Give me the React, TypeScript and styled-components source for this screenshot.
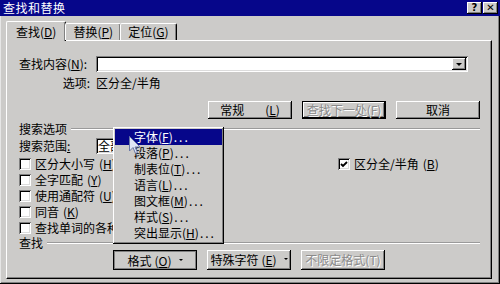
import React from 'react';
import styled, { createGlobalStyle } from 'styled-components';

const FACE = '#cccbc9';
const NAVY = '#06068a';

const GlobalStyle = createGlobalStyle`
  html, body { margin: 0; padding: 0; background: ${FACE}; }
  body {
    font-family: "Noto Sans CJK SC", "DejaVu Sans", sans-serif;
    font-size: 12px;
    color: #000;
  }
`;

const raised = `inset -1px -1px #000, inset 1px 1px #fff, inset -2px -2px #808080, inset 2px 2px ${FACE}`;
const sunken = `inset 1px 1px #808080, inset -1px -1px #fff, inset 2px 2px #000, inset -2px -2px #dcdcdc`;

const Window = styled.div`
  position: relative;
  width: 500px;
  height: 284px;
  box-sizing: border-box;
  background: ${FACE};
  box-shadow: inset -1px -1px #000, inset 1px 1px #e6e6e6, inset -2px -2px #808080;
  display: flex;
  flex-direction: column;
  overflow: hidden;
  line-height: 1;
`;

const TitleBar = styled.div`
  height: 16px;
  background: ${NAVY};
  color: #fff;
  display: flex;
  align-items: center;
  padding: 0 2px 0 3px;
  font-size: 12px;
`;

const TitleText = styled.span`
  flex: 1;
  letter-spacing: 0.5px;
`;

const CaptionButton = styled.div`
  width: 15px;
  height: 12px;
  margin-left: 1px;
  background: ${FACE};
  box-shadow: ${raised};
  color: #000;
  display: flex;
  align-items: center;
  justify-content: center;
  font-family: "DejaVu Sans", sans-serif;
  font-weight: bold;
  font-size: 10px;
`;

const Body = styled.div`
  flex: 1;
  padding: 4px 8px 5px 6px;
  display: flex;
  flex-direction: column;
`;

const TabRow = styled.div`
  display: flex;
  align-items: flex-end;
  height: 20px;
  position: relative;
  z-index: 1;
`;

const Tab = styled.div<{ active?: boolean }>`
  height: ${p => (p.active ? 20 : 17)}px;
  padding: 0 ${p => (p.active ? 9 : 7)}px;
  margin-left: ${p => (p.active ? 0 : -1)}px;
  margin-bottom: ${p => (p.active ? -1 : 0)}px;
  background: ${FACE};
  border-top: 1px solid #fff;
  border-left: 1px solid #fff;
  border-right: 1px solid #000;
  border-top-left-radius: 2px;
  border-top-right-radius: 2px;
  box-shadow: inset -1px 0 #808080;
  display: flex;
  align-items: center;
  box-sizing: border-box;
`;

const Panel = styled.div`
  flex: 1;
  border-top: 1px solid #fff;
  border-left: 1px solid #fff;
  border-right: 1px solid #000;
  border-bottom: 1px solid #000;
  box-shadow: inset -1px -1px #808080;
  padding: 15px 11px 0 12px;
  display: flex;
  flex-direction: column;
`;

const Row = styled.div<{ h: number; mt?: number }>`
  height: ${p => p.h}px;
  margin-top: ${p => p.mt || 0}px;
  display: flex;
  align-items: center;
`;

const Label = styled.span<{ right?: boolean }>`
  width: 77px;
  flex-shrink: 0;
  text-align: ${p => (p.right ? 'right' : 'left')};
  padding-right: ${p => (p.right ? 6 : 0)}px;
  box-sizing: border-box;
  white-space: nowrap;
`;

const Combo = styled.div<{ w: number; start?: boolean }>`
  width: ${p => p.w}px;
  height: 16px;
  background: #fff;
  box-shadow: ${sunken};
  display: flex;
  justify-content: ${p => (p.start ? 'flex-start' : 'flex-end')};
  align-items: center;
  padding: 2px;
  box-sizing: border-box;
`;

const DropButton = styled.div`
  width: 14px;
  height: 12px;
  background: ${FACE};
  box-shadow: ${raised};
  display: flex;
  align-items: center;
  justify-content: center;
  &::after {
    content: '';
    border-left: 3px solid transparent;
    border-right: 3px solid transparent;
    border-top: 3px solid #000;
  }
`;

const ButtonRow = styled.div<{ mt: number; left?: number }>`
  display: flex;
  gap: 10px;
  margin-top: ${p => p.mt}px;
  justify-content: ${p => (p.left !== undefined ? 'flex-start' : 'flex-end')};
  padding-left: ${p => p.left || 0}px;
`;

const Button = styled.div<{ disabled?: boolean; isDefault?: boolean; pressed?: boolean; h?: number }>`
  width: 84px;
  height: ${p => p.h || 18}px;
  box-sizing: border-box;
  background: ${FACE};
  display: flex;
  align-items: center;
  justify-content: center;
  gap: 3px;
  white-space: nowrap;
  color: ${p => (p.disabled ? '#8a8a8a' : '#000')};
  text-shadow: ${p => (p.disabled ? '1px 1px #fff' : 'none')};
  border: ${p => (p.isDefault || p.pressed ? '1px solid #000' : 'none')};
  box-shadow: ${p =>
    p.pressed
      ? 'inset 1px 1px #808080, inset -1px -1px #808080'
      : p.isDefault
      ? `inset -1px -1px #000, inset 1px 1px #fff, inset -2px -2px #808080`
      : raised};
  padding-top: ${p => (p.pressed ? 2 : 0)}px;
`;

const Spaced = styled.span`
  margin-right: 18px;
`;

const Arrow = styled.span`
  display: inline-block;
  margin-left: 4px;
  border-left: 2px solid transparent;
  border-right: 2px solid transparent;
  border-top: 2px solid #000;
  transform: translateY(-1px);
`;

const Group = styled.div<{ mt: number }>`
  display: flex;
  align-items: center;
  margin-top: ${p => p.mt}px;
  height: 12px;
  &::after {
    content: '';
    flex: 1;
    margin-left: 4px;
    border-top: 1px solid #9a9a9a;
    border-bottom: 1px solid #fff;
  }
`;

const CheckGrid = styled.div`
  display: grid;
  grid-template-columns: 319px 1fr;
  grid-auto-rows: 16px;
  margin-top: 2px;
`;

const CheckItem = styled.div`
  display: flex;
  align-items: center;
  gap: 4px;
  white-space: nowrap;
`;

// text that runs under the open menu is cut where the menu starts
const Clip = styled.span`
  max-width: 78px;
  overflow: hidden;
`;

const Box = styled.div`
  width: 12px;
  height: 12px;
  flex-shrink: 0;
  background: #fff;
  box-shadow: ${sunken};
  display: flex;
  align-items: center;
  justify-content: center;
`;

const Menu = styled.div`
  position: absolute;
  left: 113px;
  top: 127px;
  width: 111px;
  padding: 2px 2px 3px;
  box-sizing: border-box;
  background: ${FACE};
  box-shadow: ${raised};
  z-index: 5;
`;

const MenuItem = styled.div<{ active?: boolean }>`
  height: 16px;
  padding-left: 19px;
  display: flex;
  align-items: center;
  background: ${p => (p.active ? NAVY : 'transparent')};
  color: ${p => (p.active ? '#fff' : '#000')};
  white-space: nowrap;
`;

const Dots = styled.span`
  letter-spacing: 2px;
  margin-left: 1px;
`;

const Cursor = styled.svg`
  position: absolute;
  left: 129px;
  top: 136px;
  z-index: 6;
`;

const Key = ({ k }: { k: string }) => (
  <span>
    (<u>{k}</u>)
  </span>
);

const menuItems: Array<[string, string]> = [
  ['字体', 'F'],
  ['段落', 'P'],
  ['制表位', 'T'],
  ['语言', 'L'],
  ['图文框', 'M'],
  ['样式', 'S'],
  ['突出显示', 'H'],
];

const App = () => (
  <>
    <GlobalStyle />
    <Window>
      <TitleBar>
        <TitleText>查找和替换</TitleText>
        <CaptionButton>?</CaptionButton>
        <CaptionButton>✕</CaptionButton>
      </TitleBar>
      <Body>
        <TabRow>
          <Tab active>查找<Key k="D" /></Tab>
          <Tab>替换<Key k="P" /></Tab>
          <Tab>定位<Key k="G" /></Tab>
        </TabRow>
        <Panel>
          <Row h={16}>
            <Label>查找内容<Key k="N" />:</Label>
            <Combo w={372}><DropButton /></Combo>
          </Row>
          <Row h={14} mt={4}>
            <Label right>选项:</Label>
            <span>区分全/半角</span>
          </Row>
          <ButtonRow mt={11}>
            <Button>
              <Spaced>常规</Spaced>
              <Key k="L" />
            </Button>
            <Button disabled isDefault>查找下一处(F)</Button>
            <Button>取消</Button>
          </ButtonRow>
          <Group mt={4}>搜索选项</Group>
          <Row h={16} mt={3}>
            <Label>搜索范围<u>:</u></Label>
            <Combo w={60} start>全部</Combo>
          </Row>
          <CheckGrid>
            <CheckItem><Box />区分大小写<Key k="H" /></CheckItem>
            <CheckItem>
              <Box>
                <svg width="8" height="7" viewBox="0 0 8 7">
                  <path d="M1 3 L3 5 L7 1" stroke="#000" strokeWidth="1.8" fill="none" />
                </svg>
              </Box>
              区分全/半角<Key k="B" />
            </CheckItem>
            <CheckItem><Box />全字匹配<Key k="Y" /></CheckItem>
            <div />
            <CheckItem><Box />使用通配符<Key k="U" /></CheckItem>
            <div />
            <CheckItem><Box />同音<Key k="K" /></CheckItem>
            <div />
            <CheckItem><Box /><Clip>查找单词的各种形式(W)</Clip></CheckItem>
          </CheckGrid>
          <Group mt={1}>查找</Group>
          <ButtonRow mt={1} left={94}>
            <Button pressed h={20}>格式<Key k="O" /><Arrow /></Button>
            <Button h={20}>特殊字符<Key k="E" /><Arrow /></Button>
            <Button disabled h={20}>不限定格式(T)</Button>
          </ButtonRow>
        </Panel>
      </Body>
      <Menu>
        {menuItems.map(([name, k], i) => (
          <MenuItem key={k} active={i === 0}>
            {name}<Key k={k} /><Dots>...</Dots>
          </MenuItem>
        ))}
      </Menu>
      <Cursor width="12" height="19" viewBox="0 0 12 19">
        <path d="M0.5 0.5 L0.5 15 L4 11.5 L6.5 17.5 L8.5 16.5 L6 11 L11 11 Z" fill="#dfe6f5" stroke="#6a78a8" strokeWidth="1" />
      </Cursor>
    </Window>
  </>
);

export default App;
